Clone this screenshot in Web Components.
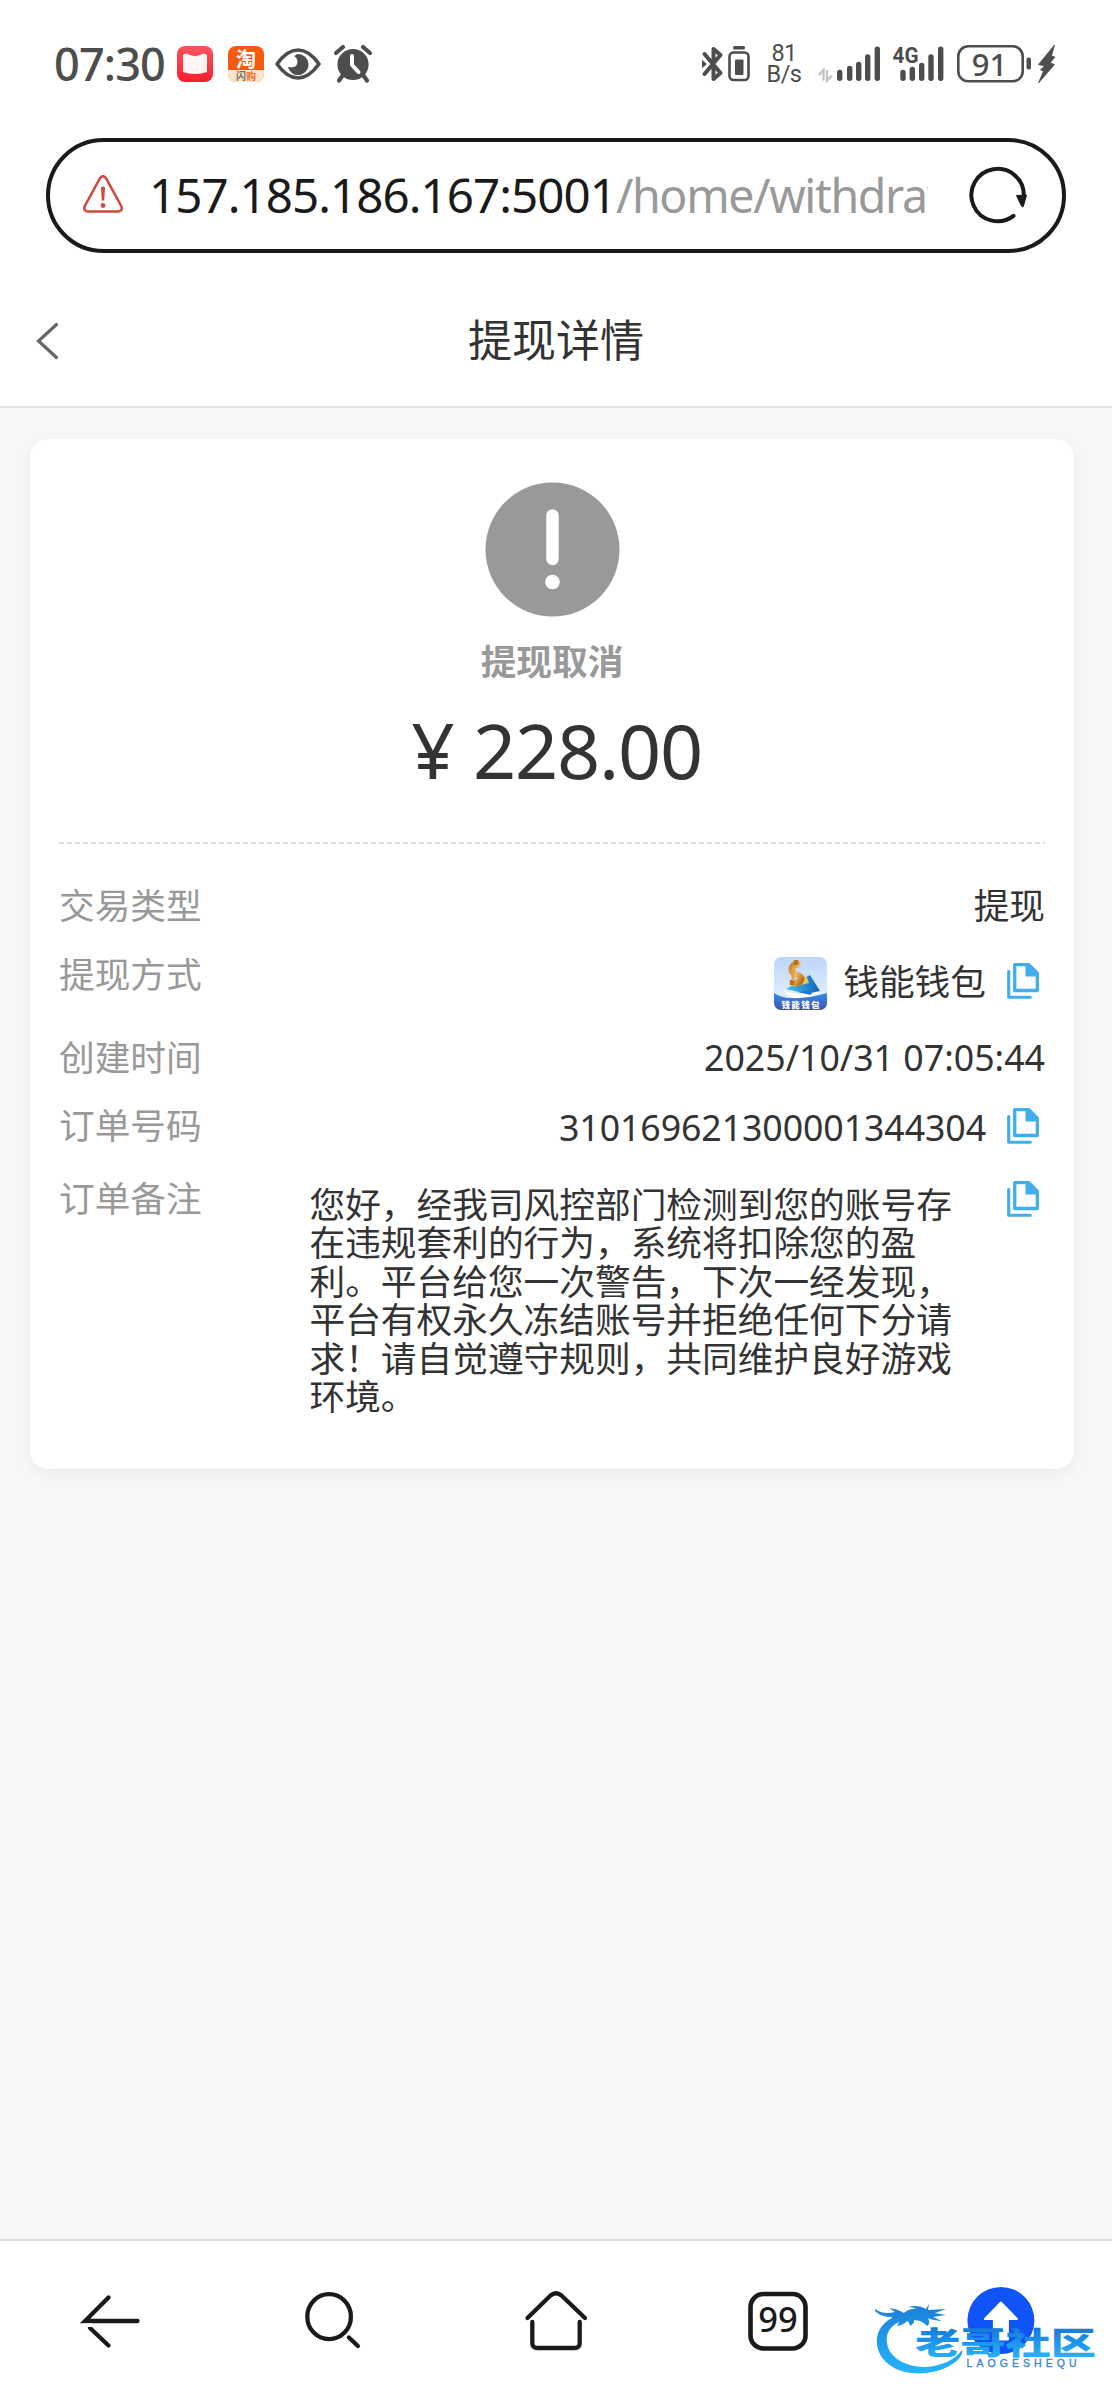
<!DOCTYPE html>
<html lang="zh-CN">
<head>
<meta charset="utf-8">
<title>提现详情</title>
<style>
html,body{margin:0;padding:0;background:#fff}
body{width:1112px;height:2400px;overflow:hidden;font-family:"Noto Sans CJK SC",sans-serif;color:#333}
</style>
</head>
<body>
<phone-screen>
  <status-bar></status-bar>
  <address-bar host="157.185.186.167:5001" path="/home/withdrawDetail"></address-bar>
  <page-header>提现详情</page-header>
  <detail-card>
    <status-summary amount="228.00">提现取消</status-summary>
    <detail-row label="交易类型" style="height:69px">提现</detail-row>
    <detail-row label="提现方式" style="height:83px;--shift:7px;--icon-shift:8px" copy><wallet-logo slot="logo"></wallet-logo>钱能钱包</detail-row>
    <detail-row label="创建时间" style="height:68px"><fit-text w="341" size="35.7">2025/10/31 07:05:44</fit-text></detail-row>
    <detail-row label="订单号码" style="height:72.5px;--shift:2px;--icon-shift:2px" copy><fit-text w="427" size="35.7">310169621300001344304</fit-text></detail-row>
    <detail-row label="订单备注" style="--shift:5px;--icon-shift:2px" note copy>您好，经我司风控部门检测到您的账号存在违规套利的行为，系统将扣除您的盈利。平台给您一次警告，下次一经发现，平台有权永久冻结账号并拒绝任何下分请求！请自觉遵守规则，共同维护良好游戏环境。</detail-row>
  </detail-card>
  <bottom-nav></bottom-nav>
  <site-watermark></site-watermark>
</phone-screen>
<script>
const define = (name, html, init) => customElements.define(name, class extends HTMLElement {
  connectedCallback() {
    if (this.shadowRoot) return;
    const t = document.createElement('template');
    t.innerHTML = typeof html === 'function' ? html(this) : html;
    this.attachShadow({mode: 'open'}).append(t.content.cloneNode(true));
    if (init) init(this);
  }
});

/* Single line of Latin text, tracked so that it fills the width in "w". */
define('fit-text', el => `<style>
:host{display:inline-block;white-space:pre;font-family:"Noto Sans",sans-serif;font-size:${el.getAttribute('size')}px}
span{display:inline-block}
</style><span><slot></slot></span>`, el => {
  const s = el.shadowRoot.querySelector('span');
  const n = el.textContent.length;
  const gap = (parseFloat(el.getAttribute('w')) - s.getBoundingClientRect().width) / n;
  s.style.letterSpacing = gap.toFixed(3) + 'px';
});

define('phone-screen', `<style>
:host{display:flex;flex-direction:column;position:relative;width:1112px;height:2400px;background:#fff}
</style><slot></slot>`);

define('status-bar', `<style>
:host{display:flex;align-items:center;height:127px;flex:none;padding:0 56px 0 54px;box-sizing:border-box;color:#4d4d4d;justify-content:space-between}
.g{display:flex;align-items:center}
svg{display:block;flex:none;overflow:visible}
.speed{display:flex;flex-direction:column;align-items:center;width:40px;margin-left:14px}
.speed fit-text{line-height:21px;height:21px;font-family:Roboto,sans-serif}
fit-text{line-height:50px}
</style>
<div class="g">
  <fit-text w="111" size="45" style="font-weight:500">07:30</fit-text>
  <svg width="36" height="36" viewBox="0 0 36 36" style="margin-left:11.500px"><defs><linearGradient id="r" x2="0" y2="1"><stop stop-color="#fb5461"/><stop offset="1" stop-color="#f6202e"/></linearGradient></defs><rect width="36" height="36" rx="8" fill="url(#r)"/><path d="M6 9q3-3 7 0 5 2 10 0 4-3 7 0v17q-12 4-24 0z" fill="#fff4f3"/></svg>
  <svg width="36" height="36" viewBox="0 0 36 36" style="margin-left:15px"><defs><clipPath id="c"><rect width="36" height="36" rx="8"/></clipPath></defs><g clip-path="url(#c)"><rect width="36" height="36" fill="#f55a10"/><rect y="24" width="36" height="12" fill="#fbe4cb"/></g><text x="18" y="20.500" text-anchor="middle" font-family="Noto Sans CJK SC" font-weight="700" font-size="20" fill="#fff">淘</text><text x="8" y="34" font-family="Noto Sans CJK SC" font-weight="700" font-size="10" fill="#776c62">闪<tspan fill="#ed6a2a">购</tspan></text></svg>
  <svg width="46" height="32" viewBox="0 0 46 32" style="margin-left:11px"><path d="M2 16Q12 2 23 2t21 14Q34 30 23 30T2 16z" fill="none" stroke="#4d4d4d" stroke-width="3.600" stroke-linejoin="round"/><path d="M23 6a10.500 10.500 0 1 1-10.200 12.800Q22 21 22.500 14q0-4-3-5.500Q20.500 6.300 23 6z" fill="#4d4d4d"/></svg>
  <svg width="38" height="38" viewBox="0 0 38 38" style="margin-left:13.500px"><circle cx="19" cy="19.500" r="15.600" fill="#4d4d4d"/><path d="M9 30l-4 5.500M29 30l4 5.500M2 8l7-6M29 2l7 6" stroke="#4d4d4d" stroke-width="4.200" stroke-linecap="round"/><path d="M18 11v9l6.500 7" fill="none" stroke="#fff" stroke-width="4" stroke-linecap="round" stroke-linejoin="round"/></svg>
</div>
<div class="g">
  <svg width="22" height="36" viewBox="0 0 22 36"><path d="M2.500 8l16 19-7 6V3l7 6-16 19" fill="none" stroke="#4d4d4d" stroke-width="4" stroke-linejoin="round" stroke-linecap="round"/><path d="M0 14l5 4-5 4z" fill="#4d4d4d"/></svg>
  <svg width="22" height="36" viewBox="0 0 22 36" style="margin-left:4px"><rect x="5" width="12" height="3.500" rx="1.500" fill="#4d4d4d"/><rect x="1.500" y="6.500" width="19" height="27.500" rx="4" fill="none" stroke="#4d4d4d" stroke-width="2.600"/><rect x="7" y="13.500" width="8.500" height="15.500" rx="1" fill="#4d4d4d"/></svg>
  <div class="speed"><fit-text w="25" size="23.500">81</fit-text><fit-text w="35" size="23.500">B/s</fit-text></div>
  <svg width="64" height="36" viewBox="816 46 64 36" style="margin-left:13px"><path d="M818 75l4.500-5v10.500M826 70v10.500l5-5" fill="none" stroke="#c4c4c4" stroke-width="2.400"/><path d="M838.700 72.500v5.700M848.700 68.500v9.700M857.700 64.500v13.700M866.700 57v21.200M876.300 49.200v29" stroke="#4d4d4d" stroke-width="5.400" stroke-linecap="round"/></svg>
  <svg width="52" height="37" viewBox="892 45 52 37" style="margin-left:11px"><text x="892.500" y="63.300" font-family="Roboto" font-weight="700" font-size="22.500" fill="#4d4d4d" textLength="26" lengthAdjust="spacingAndGlyphs">4G</text><path d="M903 72.500v5.700M912.300 69.500v8.700M921.700 65.500v12.700M931 57v21.200M940.700 49.200v29" stroke="#4d4d4d" stroke-width="5.400" stroke-linecap="round"/></svg>
  <svg width="100" height="38" viewBox="956 45 100 38" style="margin-left:12px"><rect x="958.300" y="46.300" width="64.400" height="35" rx="10" fill="none" stroke="#4d4d4d" stroke-width="2.600"/><rect x="1026.500" y="57.500" width="4.500" height="12" rx="2" fill="#4d4d4d"/><text x="989.500" y="75.500" text-anchor="middle" font-family="Noto Sans" font-weight="500" font-size="31" fill="#4d4d4d">91</text><path d="M1054.500 45l-16 19.500 6 1.500-4 4 3 1-5 12 16-18.500-4.500-1.500 5-6-3.500-1z" fill="#4d4d4d" stroke="#4d4d4d" stroke-width=".8" stroke-linejoin="round"/></svg>
</div>`);

define('address-bar', el => `<style>
:host{display:flex;align-items:center;flex:none;box-sizing:border-box;width:1020px;height:115px;margin:10.500px 46px 0;border:4px solid #1a1a1a;border-radius:58px;padding:0 36px 0 32px}
.url{flex:none;width:779px;margin-left:25px;height:64px;line-height:64px;overflow:hidden;white-space:nowrap;display:flex}
.host{color:#1a1a1a}.path{color:#999}
svg{flex:none;display:block}
</style>
<svg width="42" height="40" viewBox="0 0 42 40"><path d="M17.800 3.500q3.200-4.500 6.400 0l15 27.500q2 5-3.200 5.500H6q-5.200-.5-3.200-5.500z" fill="none" stroke="#cf4a3a" stroke-width="2.600" stroke-linejoin="round"/><path d="M19 12.500q2-2 4 0l-.8 13h-2.400z" fill="#cf4a3a"/><circle cx="21" cy="30.500" r="2.400" fill="#cf4a3a"/></svg>
<div class="url"><fit-text class="host" w="467" size="47.500">${el.getAttribute('host')}</fit-text><fit-text class="path" w="465" size="46.500">${el.getAttribute('path')}</fit-text></div>
<svg width="60" height="60" viewBox="968 165 60 60" style="margin-left:40px"><path d="M1013.500 215.800A26.200 26.200 0 1 1 1023.700 197" fill="none" stroke="#1a1a1a" stroke-width="4" stroke-linecap="round"/><path d="M1016.500 195.500l10-.5-3.200 11.500q-1 .8-1.800-.5z" fill="#1a1a1a" stroke="#1a1a1a" stroke-linejoin="round"/></svg>`);

define('page-header', `<style>
:host{display:grid;grid-template-columns:60px 1fr 60px;align-items:center;flex:none;box-sizing:border-box;height:155.500px;padding:17px 35px 0;border-bottom:2.500px solid #e2e2e2;font-size:44px;line-height:48px;color:#333;background:#fff}
div{text-align:center}
svg{display:block;margin-top:6px}
</style>
<svg width="24" height="38" viewBox="0 0 24 38"><path d="M21.500 2.500L3.500 19l18 16.500" fill="none" stroke="#666" stroke-width="3.200" stroke-linecap="round"/></svg><div><slot></slot></div>`);

define('detail-card', `<style>
:host{display:block;flex:1;background:#f7f7f7;padding:31px 38px 0 30px}
section{background:#fff;box-sizing:border-box;height:1030px;border-radius:18px;padding:43px 29px 0;box-shadow:0 4px 14px rgba(0,0,0,.055)}
</style><section><slot></slot></section>`);

define('status-summary', el => `<style>
:host{display:flex;flex-direction:column;align-items:center;margin-bottom:42px}
svg{display:block}
.state{margin-top:25px;height:36px;line-height:36px;font-size:35.700px;font-weight:700;color:#999}
.amount{display:flex;margin-top:32px;height:80px;line-height:80px;color:#333}
.yen{font:400 76px/80px "Noto Sans",sans-serif;width:62px;text-align:center;white-space:nowrap}
.rule{width:100%;height:2px;margin-top:52px;background:repeating-linear-gradient(90deg,#ddd 0 5px,transparent 5px 8px)}
</style>
<svg width="135" height="135" viewBox="0 0 135 135"><circle cx="67.500" cy="67.500" r="67" fill="#999"/><path d="M67.500 33.500v43.500" stroke="#fff" stroke-width="12.500" stroke-linecap="round"/><circle cx="67.500" cy="100" r="7.300" fill="#fff"/></svg>
<div class="state"><slot></slot></div>
<div class="amount"><span class="yen">¥</span><fit-text w="229" size="75.500" style="margin-left:9px">${el.getAttribute('amount')}</fit-text></div>
<div class="rule"></div>`);

define('copy-icon', `<style>:host{display:block;width:32px;height:36px}svg{display:block}</style>
<svg width="32" height="36" viewBox="0 0 32 36"><path d="M1.700 8.500v25.700h21.600" fill="none" stroke="#40adec" stroke-width="3.100" stroke-linecap="round" stroke-linejoin="round"/><path d="M8.500 1.700h13.300l8.500 8.500v17.300H7.700V1.700z" fill="none" stroke="#40adec" stroke-width="3.300" stroke-linejoin="round"/><path d="M18.500 1v12.500H31V10l-9-9z" fill="#40adec"/></svg>`);

define('detail-row', el => `<style>
:host{display:flex;justify-content:space-between;align-items:flex-start;font-size:35.700px;line-height:36px;color:#333}
.label{color:#999;flex:none}
.right{display:flex;align-items:flex-start}
.value{margin-top:var(--shift,0)}
:host([note]) .value{width:650px;line-height:38.500px}
copy-icon{margin:var(--icon-shift,0) 6px 0 21px}
:host([note]) copy-icon{margin-left:47.500px}
::slotted(wallet-logo){margin:2px 16px 0 0}
</style>
<div class="label">${el.getAttribute('label')}</div>
<div class="right"><slot name="logo"></slot><div class="value"><slot></slot></div>${el.hasAttribute('copy') ? '<copy-icon></copy-icon>' : ''}</div>`);

define('wallet-logo', `<style>:host{display:block;width:53px;height:53px}svg{display:block}</style>
<svg width="53" height="53" viewBox="0 0 53 53"><defs><linearGradient id="s" x2="0" y2="1"><stop stop-color="#bcd6f8"/><stop offset="1" stop-color="#eef6ff"/></linearGradient><linearGradient id="w" x2="0" y2="1"><stop stop-color="#328fe6"/><stop offset="1" stop-color="#4450ae"/></linearGradient><linearGradient id="b"><stop stop-color="#46c3ee"/><stop offset="1" stop-color="#1460bb"/></linearGradient><linearGradient id="g" x2="1" y2="1"><stop stop-color="#cf8427"/><stop offset=".5" stop-color="#f0bd68"/><stop offset="1" stop-color="#b96d1f"/></linearGradient><clipPath id="k"><rect width="53" height="53" rx="7"/></clipPath></defs>
<g clip-path="url(#k)"><rect width="53" height="53" fill="url(#s)"/><path d="M12 32l24-14 10 16-8 4z" fill="url(#b)"/><path d="M18 30l14-12 3 8z" fill="#e9c75b"/><path d="M26 8q-6-2-8 3-1 4 3 6 7 2 6 6-3 5-10 2" fill="none" stroke="url(#g)" stroke-width="6.500"/><path d="M22 3v5M18 23v5" stroke="#b97125" stroke-width="4.500"/><path d="M19 13v11" stroke="#e0a24a" stroke-width="3"/><path d="M8 32q14 9 38 2-5 8-19 8-13 0-19-10z" fill="#fff"/><path d="M0 36q8 5 17 5 16 1 36-5v17H0z" fill="url(#w)"/><path d="M24 35l14-1-1 4z" fill="#1c78ca"/></g><text x="26.500" y="50.500" text-anchor="middle" font-family="Noto Sans CJK SC" font-weight="900" font-size="8.500" fill="#fff" textLength="38">钱能钱包</text></svg>`);

define('bottom-nav', `<style>
:host{display:flex;flex:none;box-sizing:border-box;height:161px;border-top:2px solid #dedede;background:#fff}
div{flex:1;display:flex;justify-content:center;align-items:center}
svg{display:block}
</style>
<div><svg width="70" height="70" viewBox="0 0 70 70"><g fill="none" stroke="#1a1a1a" stroke-width="4.300" stroke-linecap="round"><path d="M32.500 11.500L9 35h52.500"/><path d="M14 42L32.500 59.500"/></g><path d="M7 37.500h9v3.500H7z" fill="#fff"/></svg></div>
<div><svg width="70" height="70" viewBox="298.600 2285 70 70"><ellipse cx="328.700" cy="2315.700" rx="21.800" ry="22.500" fill="none" stroke="#1a1a1a" stroke-width="4.300"/><path d="M348.500 2336.500l9 8.500" stroke="#1a1a1a" stroke-width="4.300" stroke-linecap="round"/></svg></div>
<div><svg width="70" height="70" viewBox="521 2285 70 70"><g fill="none" stroke="#1a1a1a" stroke-width="4.300" stroke-linecap="round"><path d="M527.500 2317l23-22.500q5.500-4.500 11 0l23.500 22.500"/><path d="M532.300 2321v21q0 5 5.500 5h36.400q5.500 0 5.500-5v-21"/></g></svg></div>
<div><svg width="70" height="70" viewBox="743.500 2285 70 70"><rect x="751" y="2293" width="55" height="54.500" rx="13" fill="none" stroke="#1a1a1a" stroke-width="4.600"/><text x="778.500" y="2330.500" text-anchor="middle" font-family="Noto Sans" font-weight="500" font-size="34.500" fill="#1a1a1a">99</text></svg></div>
<div><svg width="70" height="70" viewBox="965.600 2285 70 70"><circle cx="1000.500" cy="2319.500" r="33.500" fill="#1054f8"/><path d="M1000.500 2301.500l16 16.500h-9v20.500h-14V2318h-9z" fill="#fff" stroke="#fff" stroke-width="2" stroke-linejoin="round"/></svg></div>`);

define('site-watermark', `<style>
:host{display:block;position:absolute;left:871px;top:2295px;width:232px;height:84px}svg{display:block;overflow:visible}
</style>
<svg width="232" height="84" viewBox="870 2295 232 84"><defs><linearGradient id="m" gradientUnits="userSpaceOnUse" x1="0" y1="2305" x2="0" y2="2373"><stop stop-color="#1a7fd8"/><stop offset="1" stop-color="#25b5fb"/></linearGradient><linearGradient id="n" gradientUnits="userSpaceOnUse" x1="0" y1="2327" x2="0" y2="2357"><stop stop-color="#1677d6"/><stop offset="1" stop-color="#27b2fa"/></linearGradient></defs>
<path d="M913 2313C884 2314 872 2331 877 2349C883 2370 911 2378 936 2371C953 2366 963 2356 961 2350C954 2360 940 2366 925 2367C903 2367 888 2357 886 2343C884 2329 895 2319 914 2319z" fill="url(#m)"/>
<path d="M874 2309q8 6 20 3-4-3-6-4 9 1 15 5 6-5 13-4-4-2-9-2 10-3 18 2l3-5-1 6 18-1-11 4 11 2-13 2 9 4q-11-1-14-3 3 5-1 8-5-6-13-6 1 3-4 6-1-5-3-5-3 4-10 5 3-5 2-6-5 3-10 3 3-4 3-6-11 0-17-6z" transform="translate(0 -25) translate(0 25)" fill="url(#m)"/>
<text x="914" y="2354" font-family="Noto Sans CJK SC" font-weight="900" font-size="31" fill="url(#n)" textLength="181" lengthAdjust="spacingAndGlyphs">老哥社区</text>
<text x="965.500" y="2366.500" font-family="Liberation Sans" font-size="10.500" fill="#2f86d6" stroke="#2f86d6" stroke-width=".3" textLength="110">LAOGESHEQU</text></svg>`);
</script>
</body>
</html>
